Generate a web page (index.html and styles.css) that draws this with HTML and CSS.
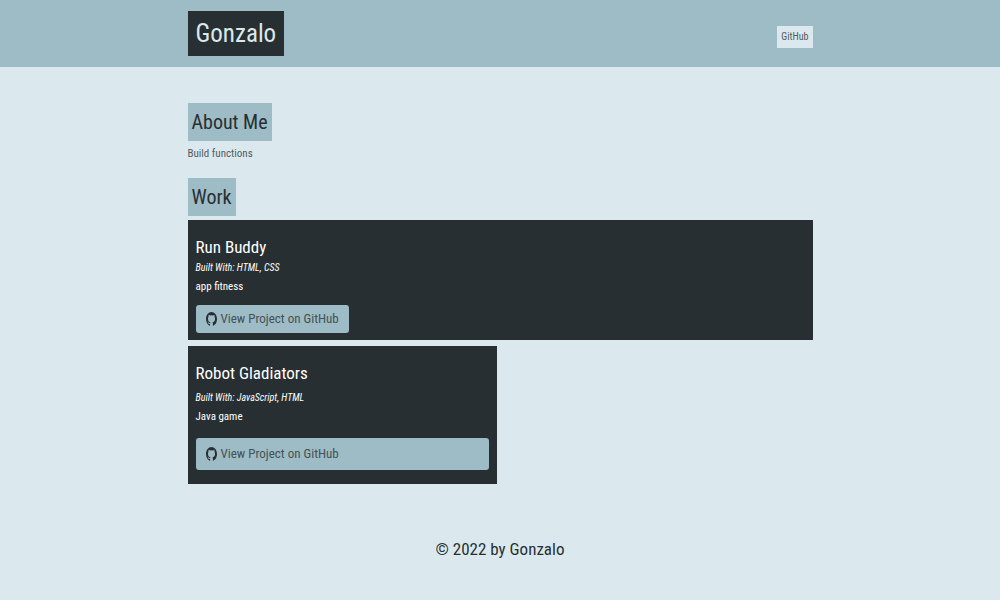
FILE: index.html
```html
<!DOCTYPE html>
<html lang="en">
<head>
<meta charset="utf-8">
<meta name="viewport" content="width=device-width, initial-scale=1">
<title>Gonzalo</title>
<link rel="stylesheet" href="styles.css">
</head>
<body>
<svg class="sprite" aria-hidden="true">
  <symbol id="github" viewBox="0 0 16 16" preserveAspectRatio="none"><path d="M8 0C3.580 0 0 3.580 0 8c0 3.540 2.290 6.530 5.470 7.590.4.070.550-.170.550-.380 0-.190-.010-.820-.010-1.490-2.010.370-2.530-.490-2.690-.940-.090-.230-.480-.940-.820-1.130-.280-.150-.680-.520-.010-.530.630-.010 1.080.580 1.230.820.720 1.210 1.870.870 2.330.660.070-.520.280-.870.510-1.070-1.780-.2-3.640-.890-3.640-3.950 0-.870.310-1.590.820-2.150-.080-.2-.360-1.020.080-2.120 0 0 .670-.210 2.200.820a7.500 7.500 0 0 1 4 0c1.530-1.040 2.200-.820 2.200-.820.440 1.100.160 1.920.080 2.120.510.560.820 1.270.820 2.150 0 3.070-1.870 3.750-3.650 3.950.290.250.540.730.540 1.480 0 1.070-.010 1.930-.010 2.200 0 .210.150.460.550.380A8 8 0 0 0 16 8c0-4.420-3.580-8-8-8z"/></symbol>
</svg>
<header class="site-header">
  <div class="container header-row">
    <h1 class="brand">Gonzalo</h1>
    <nav><a class="nav-link" href="#">GitHub</a></nav>
  </div>
</header>
<main class="container main">
  <section class="about">
    <h2 class="section-title">About Me</h2>
    <p class="intro">Build functions</p>
  </section>
  <section>
    <h2 class="section-title">Work</h2>
    <div class="projects">
      <article class="project featured">
        <h3 class="project-title">Run Buddy</h3>
        <p class="built">Built With: HTML, CSS</p>
        <p class="summary">app fitness</p>
        <a class="button" href="#"><svg class="icon" aria-hidden="true"><use href="#github"/></svg>View Project on GitHub</a>
      </article>
      <article class="project">
        <h3 class="project-title">Robot Gladiators</h3>
        <p class="built">Built With: JavaScript, HTML</p>
        <p class="summary">Java game</p>
        <a class="button" href="#"><svg class="icon" aria-hidden="true"><use href="#github"/></svg>View Project on GitHub</a>
      </article>
    </div>
  </section>
</main>
<footer class="site-footer">© 2022 by Gonzalo</footer>
</body>
</html>
```
FILE: styles.css
```css
* { box-sizing: border-box; }
body {
  margin: 0;
  background: #dbe9ee;
  color: #282f32;
  font-family: "Roboto Condensed", "Open Sans Condensed", "Noto Sans Condensed", "Arial Narrow", Roboto, sans-serif;
  font-size: 11px;
  line-height: 18px;
}
h1, h2, h3, p { margin: 0; font-weight: 400; }
a { color: inherit; text-decoration: none; }
.sprite { position: absolute; width: 0; height: 0; }
.container { width: 62.5%; margin: 0 auto; }
.site-header { background: #9dbcc5; padding: 11px 0; }
.header-row { display: flex; justify-content: space-between; align-items: center; }
.brand {
  background: #282f32;
  color: #dbe9ee;
  padding: 0 8px;
  font-size: 25px;
  line-height: 45px;
}
.nav-link {
  display: block;
  margin-top: 6px;
  padding: 2px 4px;
  background: #dbe9ee;
  color: #515b5f;
  font-size: 10px;
}
.main { padding-top: 36px; }
.about { margin-bottom: 15px; }
.section-title {
  width: fit-content;
  padding: 0 4px;
  background: #9dbcc5;
  font-size: 20px;
  line-height: 38px;
}
.intro { margin-top: 4px; color: #515b5f; }
.projects { display: grid; grid-template-columns: 1fr 1fr; gap: 6px; margin-top: 4px; }
.project {
  display: flex;
  flex-direction: column;
  padding: 14px 8px;
  background: #282f32;
  color: #fff;
}
.project-title { margin-bottom: 6px; font-size: 17px; line-height: 26px; }
.built { font-size: 10px; line-height: 12px; font-style: italic; }
.summary { margin: 4px 0 12px; }
.button {
  display: flex;
  align-items: center;
  gap: 4px;
  padding: 7px 10px;
  border-radius: 3px;
  background: #9dbcc5;
  color: #465155;
  font-size: 13px;
}
.icon { width: 11px; height: 14px; fill: #282f32; }
.featured { grid-column: 1 / -1; align-items: flex-start; padding-bottom: 7px; }
.featured .project-title { margin-bottom: 2px; }
.featured .summary { margin-bottom: 9px; }
.featured .button { padding: 5px 10px; }
.site-footer { padding: 52px 0 36px; text-align: center; font-size: 17px; line-height: 26px; }
```
